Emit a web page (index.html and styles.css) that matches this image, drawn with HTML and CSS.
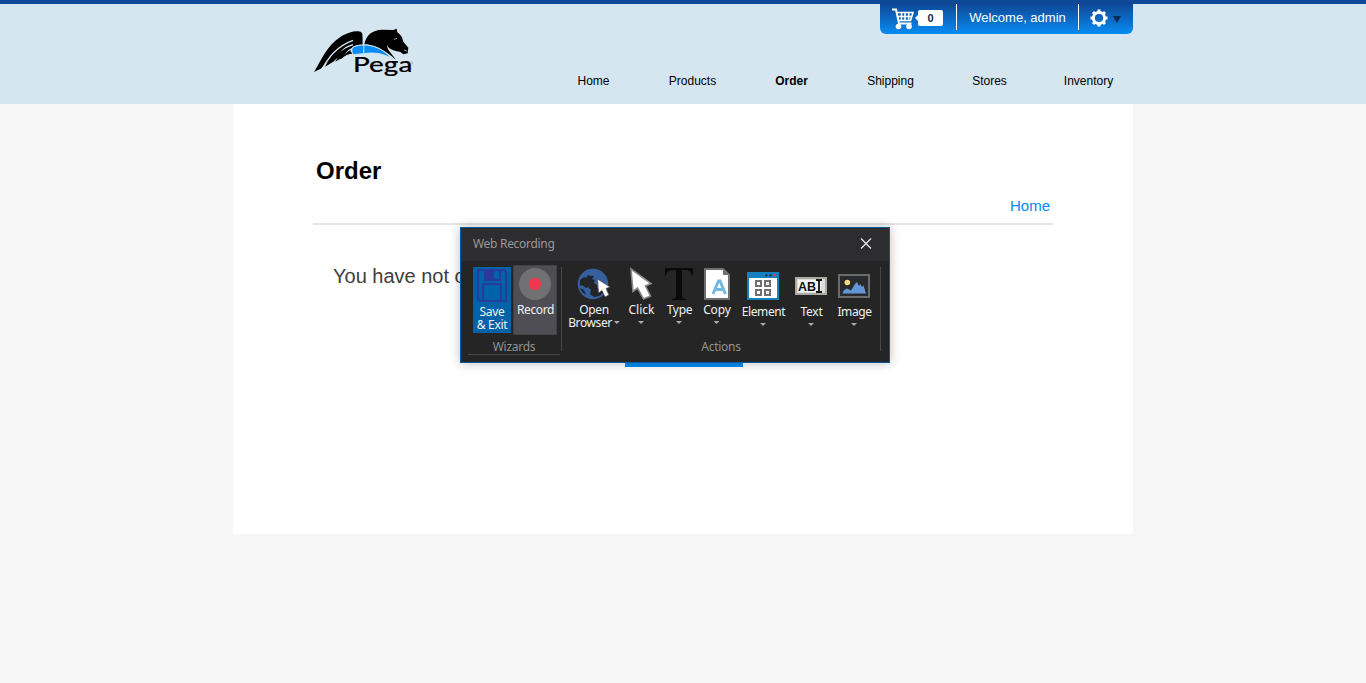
FILE: index.html
```
<!DOCTYPE html>
<html lang="en">
<head>
<meta charset="utf-8">
<title>Order</title>
<link rel="stylesheet" href="styles.css">
</head>
<body>
<header class="header">
  <div class="header-inner">
    <svg class="logo" viewBox="38 20 306 156">
      <path d="M41 155C60 125 80 75 120 50C145 34 174 29 183 36C190 42 186 60 187 73C166 72 153 80 150 93L158 100C145 100 134 105 123 115L112 118L116 110L102 120L91 127L76 138L86 120L64 144Z" fill="#000"/>
      <path d="M63 149C85 112 108 78 158 60M87 134C103 105 121 85 158 73M110 125C124 103 137 93 158 83" fill="none" stroke="#d5e6f1" stroke-width="4"/>
      <path d="M74 139C89 111 110 84 148 70C126 84 112 104 101 123ZM104 124C118 103 130 90 150 82C138 93 132 102 126 112Z" fill="#000"/>
      <path d="M192 72C197 45 214 29 246 28L279 29L289 25L291 36C302 43 306 52 309 64L324 82L322 99L309 102L299 94C282 93 267 87 260 75C261 91 276 101 286 118C263 99 232 73 192 72Z" fill="#000"/>
      <path d="M281 57L290 54M311 89L320 92" stroke="#d5e6f1" stroke-width="2"/>
      <path d="M158 80C201 64 246 81 275 116C252 100 224 95 189 100L159 103C153 97 153 86 158 80Z" fill="#078cf5" stroke="#d5e6f1" stroke-width="3"/>
      <path d="M190 34C186 53 192 62 190 98" fill="none" stroke="#d5e6f1" stroke-width="3"/>
      <text class="logo-word" x="158" y="155" textLength="178" lengthAdjust="spacingAndGlyphs">Pega</text>
      <circle cx="335" cy="127" r="3" fill="none" stroke="#72818c"/>
    </svg>
    <div class="userbar">
      <div class="cart">
        <svg width="22" height="22" viewBox="0 0 22 22" fill="none" stroke="#fff"><path d="M0 1.5H4L7 15.5H19.5" stroke-width="2"/><path d="M4 4.5H21L18.5 12.5H6M5 8.5H20M9.5 5V12M13 5V12M16.7 5V12" stroke-width="1.6"/><circle cx="6.5" cy="18.5" r="2.8" fill="#fff" stroke="none"/><circle cx="17" cy="18.5" r="2.8" fill="#fff" stroke="none"/></svg>
        <svg class="tag-tip" width="4" height="8" viewBox="0 0 4 8"><path d="M4 0V8L0 4Z" fill="#fff"/></svg>
        <span class="count">0</span>
      </div>
      <div class="welcome">Welcome, admin</div>
      <div class="settings">
        <svg width="18" height="18" viewBox="-9 -9 18 18" stroke="#fff" fill="none"><circle r="5.6" stroke-width="3"/><path d="M0-8.5V-5M0 5V8.5M-8.5 0H-5M5 0H8.5M-6-6L-4-4M4 4L6 6M-6 6L-4 4M4-4L6-6" stroke-width="3"/></svg>
        <svg width="8" height="7" viewBox="0 0 8 7"><path d="M0 0H8L4 7Z" fill="#0c2c55"/></svg>
      </div>
    </div>
    <nav class="nav"><a>Home</a><a>Products</a><a class="current">Order</a><a>Shipping</a><a>Stores</a><a>Inventory</a></nav>
  </div>
</header>
<main class="page">
  <h1>Order</h1>
  <div class="crumbs"><a>Home</a></div>
  <p class="message">You have not o</p>
  <div class="button"></div>
</main>
<section class="dialog">
  <div class="titlebar"><span>Web Recording</span>
    <svg width="12" height="12" viewBox="0 0 12 12"><path d="M1 .5L11 10.5M11 .5L1 10.5" stroke="#e6e6e6" stroke-width="1.3"/></svg>
  </div>
  <div class="ribbon">
    <div class="group wizards">
      <div class="tools">
        <div class="save">
          <svg width="30" height="33" viewBox="0 0 30 33" fill="none" stroke="#27399b" stroke-width="2"><path d="M1 1H27L29 3V32H3L1 30Z"/><path d="M6 32V15H24V32"/><path d="M8 1V11H23V1Z"/><path d="M8 1H17V11H8Z" fill="#27399b"/><path d="M17 3H21V9H17Z" fill="#0063a8" stroke="none"/></svg>
          <span>Save<br>&amp; Exit</span>
        </div>
        <div class="record">
          <svg width="32" height="32" viewBox="0 0 32 32"><circle cx="16" cy="16" r="16" fill="#707172"/><circle cx="16" cy="16" r="6.2" fill="#f23650"/></svg>
          <span>Record</span>
        </div>
      </div>
      <div class="caption">Wizards</div>
    </div>
    <div class="group actions">
      <div class="tools">
        <div class="tool open">
          <svg width="34" height="32" viewBox="0 0 34 32"><circle cx="16" cy="16" r="15.2" fill="#365f9f"/><path d="M3 12L7 9 9 10 11 7 14 8 17 8 15 11 18 12 17 15 20 17 20 20 24 21 26 25 22 28 17 29 13 26 14 22 11 19 9 20 5 17 3 18Z" fill="#222427"/><path d="M3 20L7 22 9 27 5 24Z" fill="#222427"/><path d="M20.5 11L21.5 25 25 22.5 28 29 32 27 29 20.5 33 19Z" fill="#fff" stroke="#444" stroke-width=".7"/></svg>
          <span>Open<br>Browser<i class="arrow side"></i></span>
        </div>
        <div class="tool click">
          <svg width="24" height="32" viewBox="0 0 24 32"><path d="M2 1L4 23.5 8.5 20 14.5 31 21.5 28 16.5 18 22 15.5Z" fill="#fff" stroke="#888" stroke-width="1.6"/></svg>
          <span>Click</span><i class="arrow"></i>
        </div>
        <div class="tool type">
          <svg width="28" height="32" viewBox="0 0 28 32"><path d="M0 0H28V8H27C26 3 24 2 20 2H17V27C17 30 18 31 21 31V32H7V31C10 31 11 30 11 27V2H8C4 2 2 3 1 8H0Z" fill="#080a0c"/></svg>
          <span>Type</span><i class="arrow"></i>
        </div>
        <div class="tool copy">
          <svg width="26" height="32" viewBox="0 0 26 32"><path d="M1 1H19L25 7V31H1Z" fill="#fff" stroke="#707070" stroke-width="2"/><path d="M19 0V7H26Z" fill="#707070"/><path d="M9 26L14.5 13H16L21.5 26M11.5 21.5H19.5" fill="none" stroke="#72b8df" stroke-width="2.9"/></svg>
          <span>Copy</span><i class="arrow"></i>
        </div>
        <div class="tool element">
          <svg width="32" height="28" viewBox="0 0 32 28"><path d="M0 0H32V28H0Z" fill="#1480bd"/><path d="M2 6H30V26H2Z" fill="#fff"/><circle cx="19.5" cy="3.3" r="1.1" fill="#222"/><circle cx="23.5" cy="3.3" r="1.1" fill="#222"/><circle cx="27.5" cy="3.3" r="1.3" fill="#f23650"/><g fill="none" stroke="#707070" stroke-width="2"><path d="M9 9H14V14H9ZM18 9H23V14H18ZM9 18H14V23H9ZM18 18H23V23H18Z"/></g></svg>
          <span>Element</span><i class="arrow"></i>
        </div>
        <div class="tool text">
          <svg width="32" height="18" viewBox="0 0 32 18"><path d="M1 1H31V17H1Z" fill="#ddd" stroke="#aaa9a2" stroke-width="2"/><path d="M3 3H26V15H3Z" fill="#f2f2f2"/><text class="abi" x="3" y="14" textLength="18" lengthAdjust="spacingAndGlyphs">AB</text><path d="M21 3H23L24 4 25 3H27M24 4V15M21 15H23L24 14 25 15H27" fill="none" stroke="#111" stroke-width="1.8"/></svg>
          <span>Text</span><i class="arrow"></i>
        </div>
        <div class="tool image">
          <svg width="32" height="24" viewBox="0 0 32 24"><rect x="1" y="1" width="30" height="22" fill="#292a2e" stroke="#6a6b6c" stroke-width="2"/><circle cx="9.3" cy="8.5" r="2.8" fill="#f5db79"/><path d="M4.5 19.5L6 16 9 14.5 13 16.5 17 10 19 8 21 12 22.5 10 24 13 25.5 11.5 28 19.5Z" fill="#6296d4"/></svg>
          <span>Image</span><i class="arrow"></i>
        </div>
      </div>
      <div class="caption">Actions</div>
    </div>
  </div>
</section>
</body>
</html>
```
FILE: styles.css
```
* { box-sizing: border-box; }
body { margin: 0; height: 683px; overflow: hidden; background: #f6f6f6; color: #000; font-family: "Liberation Sans", Arial, sans-serif; }
svg { display: block; flex: none; overflow: visible; }
.header { height: 104px; border-top: 4px solid #0e4896; background: #d5e6f1; }
.header-inner { width: 900px; height: 100px; margin: 0 auto; padding-left: 80px; display: grid; grid-template-columns: 231px 1fr; grid-template-rows: 64px 36px; }
.logo { width: 102px; height: 52px; margin-top: 23px; grid-row: 1 / 3; }
.logo-word { font: 500 63px Lato, sans-serif; stroke: #000; stroke-width: .5px; }
.userbar { justify-self: end; width: 253px; height: 30px; display: flex; border-radius: 0 0 6px 6px; color: #fff; background: linear-gradient(#0e4896, #078cf3); }
.cart { width: 77px; height: 26px; display: flex; align-items: flex-start; padding: 4px 0 0 12px; border-right: 1px solid #fff; }
.tag-tip { margin: 6px 0 0 1px; }
.count { width: 25px; height: 16px; margin: 2px 0 0 -1px; border-radius: 2px; background: #fff; color: #142b56; font: bold 11px/16px "Liberation Sans", sans-serif; text-align: center; }
.welcome { width: 122px; height: 26px; border-right: 1px solid #fff; text-align: center; font-size: 13px; line-height: 27px; }
.settings { display: flex; padding: 5px 0 0 11px; gap: 5px; }
.settings svg:last-child { margin-top: 7px; }
.nav { display: flex; margin-right: -5px; font-size: 12px; line-height: 26px; grid-column: 2; }
.nav a { width: 99px; flex: none; text-align: center; }
.current { font-weight: bold; }
.page { width: 900px; height: 430px; margin: 0 auto; padding: 53px 80px 0; background: #fff; }
h1 { margin: 0 3px; font-size: 24px; line-height: 28px; }
.crumbs { height: 40px; padding: 11px 3px 0; border-bottom: 2px solid #e5e5e5; color: #0788ec; font-size: 15px; line-height: 20px; text-align: right; }
.message { margin: 39px 20px 0; color: #404040; font-size: 20px; line-height: 24px; }
.button { width: 118px; height: 36px; margin: 43px 0 0 312px; background: #008ef5; }
.dialog { position: absolute; left: 460px; top: 227px; width: 430px; height: 136px; border: 1px solid #00599b; background: #252526; color: #f1f1f1; font: 12px/13px "Noto Sans", sans-serif; letter-spacing: -.3px; box-shadow: 0 0 10px #0004; }
.titlebar { height: 33px; background: #2d2d30; display: flex; align-items: center; justify-content: space-between; padding: 0 17px 2px 12px; color: #999; }
.ribbon { display: flex; height: 101px; padding: 3px 0 0 7px; }
.group { display: flex; flex-direction: column; }
.tools { flex: none; }
.wizards { width: 92px; height: 91px; border-bottom: 1px solid #48484b; }
.wizards .tools { display: flex; padding-left: 5px; gap: 2px; height: 73px; }
.save { width: 38px; height: 66px; margin-top: 3px; padding-top: 2px; background: #0063a8; display: flex; flex-direction: column; align-items: center; gap: 3px; text-align: center; white-space: nowrap; }
.record { width: 44px; height: 70px; margin-top: 1px; padding-top: 2px; border: 1px solid #434347; background: #4e4e54; display: flex; flex-direction: column; align-items: center; gap: 3px; letter-spacing: -.4px; }
.record span { padding-left: 1px; }
.caption { color: #929292; text-align: center; margin-top: 3px; letter-spacing: -.25px; }
.actions { width: 320px; height: 84px; margin: 3px 0 0 1px; border-left: 1px solid #48484b; border-right: 1px solid #48484b; }
.actions .tools { display: flex; height: 71px; padding-left: 1px; }
.tool { display: flex; flex-direction: column; align-items: center; text-align: center; flex: none; padding-top: 1px; }
.tool span { margin-top: 3px; padding-left: 1px; white-space: nowrap; }
.open { width: 61px; letter-spacing: -.4px; }
.click { width: 34px; letter-spacing: 0; }
.type { width: 42px; }
.copy { width: 33px; letter-spacing: -.1px; }
.element { width: 60px; padding-top: 5px; letter-spacing: -.4px; }
.text { width: 36px; padding-top: 10px; }
.image { width: 50px; padding-top: 7px; letter-spacing: -.4px; }
.element span { margin-top: 5px; }
.text span { margin-top: 10px; }
.image span { margin-top: 7px; }
.arrow { width: 6px; height: 3px; margin-top: 5px; background: #aaa; clip-path: polygon(0 0, 100% 0, 50% 100%); }
.side { display: inline-block; margin: 0 0 3px 2px; }
.actions .caption { margin-top: 2px; }
.abi { font: bold 13px "Liberation Sans", sans-serif; letter-spacing: 0; fill: #111; }
```
